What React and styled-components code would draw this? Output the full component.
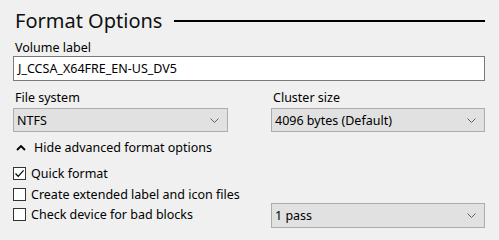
import React from 'react';
import styled, { createGlobalStyle } from 'styled-components';

const GlobalStyle = createGlobalStyle`
  html, body {
    margin: 0;
    padding: 0;
    background: #f0f0f0;
  }
  body {
    font-family: 'Noto Sans', 'Open Sans', sans-serif;
    color: #000;
  }
`;

const Chevron = ({ up }) => (
  <svg width={up ? 10 : 9} height={up ? 6 : 5} viewBox={up ? '0 0 10 6' : '0 0 9 5'}>
    <path
      d={up ? 'M1 5 L5 1 L9 5' : 'M0.5 0.5 L4.5 4.5 L8.5 0.5'}
      fill="none"
      stroke={up ? '#000' : '#606060'}
      strokeWidth={up ? 1.8 : 1}
    />
  </svg>
);

const Select = ({ value, className }) => (
  <SelectBox className={className}>
    <span>{value}</span>
    <Chevron />
  </SelectBox>
);

const Check = ({ checked, label }) => (
  <CheckRow>
    <CheckBox>
      {checked && (
        <svg width="11" height="11" viewBox="0 0 11 11">
          <path d="M1.5 5.5 L4.2 8.3 L9.6 2.4" fill="none" stroke="#000" strokeWidth="1.2" />
        </svg>
      )}
    </CheckBox>
    {label}
  </CheckRow>
);

export default function App() {
  return (
    <Page>
      <GlobalStyle />
      <Header>
        <Title>Format Options</Title>
        <Rule />
      </Header>
      <Label $gap={0}>Volume label</Label>
      <TextInput>J_CCSA_X64FRE_EN-US_DV5</TextInput>
      <Columns>
        <div>
          <Label $gap={2}>File system</Label>
          <Select value="NTFS" />
        </div>
        <div>
          <Label $gap={2}>Cluster size</Label>
          <Select value="4096 bytes (Default)" />
        </div>
      </Columns>
      <Toggle>
        <Chevron up />
        Hide advanced format options
      </Toggle>
      <Bottom>
        <Checks>
          <Check checked label="Quick format" />
          <Check label="Create extended label and icon files" />
          <Check label="Check device for bad blocks" />
        </Checks>
        <PassSelect value="1 pass" />
      </Bottom>
    </Page>
  );
}

const Page = styled.div`
  width: 499px;
  height: 240px;
  box-sizing: border-box;
  padding: 2px 14px 0 13px;
  font-size: 12.5px;
  overflow: hidden;
`;

const Header = styled.div`
  display: flex;
  align-items: center;
  gap: 12px;
  height: 37px;
`;

const Title = styled.h1`
  margin: 0 0 0 2px;
  font-size: 20px;
  font-weight: 400;
  line-height: 30px;
  color: #111;
`;

const Rule = styled.div`
  flex: 1;
  height: 2px;
  background: #000;
`;

const Label = styled.div`
  line-height: 17px;
  padding-left: 2px;
  margin-bottom: ${(p) => p.$gap}px;
`;

const TextInput = styled.div`
  height: 25px;
  box-sizing: border-box;
  border: 1px solid #7a7a7a;
  background: #fff;
  padding: 0 4px;
  line-height: 23px;
`;

const Columns = styled.div`
  display: grid;
  grid-template-columns: 215px 214px;
  column-gap: 43px;
  margin-top: 8px;
`;

const SelectBox = styled.div`
  height: 24px;
  box-sizing: border-box;
  border: 1px solid #adadad;
  background: #e1e1e1;
  display: flex;
  align-items: center;
  justify-content: space-between;
  padding: 0 8px 0 3px;
`;

const PassSelect = styled(Select)`
  height: 25px;
  margin-bottom: -5px;
`;

const Toggle = styled.div`
  display: flex;
  align-items: center;
  gap: 8px;
  padding-left: 3px;
  margin-top: 7px;
  line-height: 17px;
`;

const Bottom = styled.div`
  display: grid;
  grid-template-columns: 215px 214px;
  column-gap: 43px;
  align-items: end;
  margin-top: 9px;
`;

const Checks = styled.div`
  display: flex;
  flex-direction: column;
  gap: 3.5px;
  min-width: 0;
`;

const CheckRow = styled.div`
  display: flex;
  align-items: center;
  gap: 5px;
  line-height: 17px;
  white-space: nowrap;
`;

const CheckBox = styled.div`
  flex: none;
  width: 13px;
  height: 13px;
  box-sizing: border-box;
  border: 1px solid #333;
  background: #fff;
  display: flex;
  align-items: center;
  justify-content: center;
`;
